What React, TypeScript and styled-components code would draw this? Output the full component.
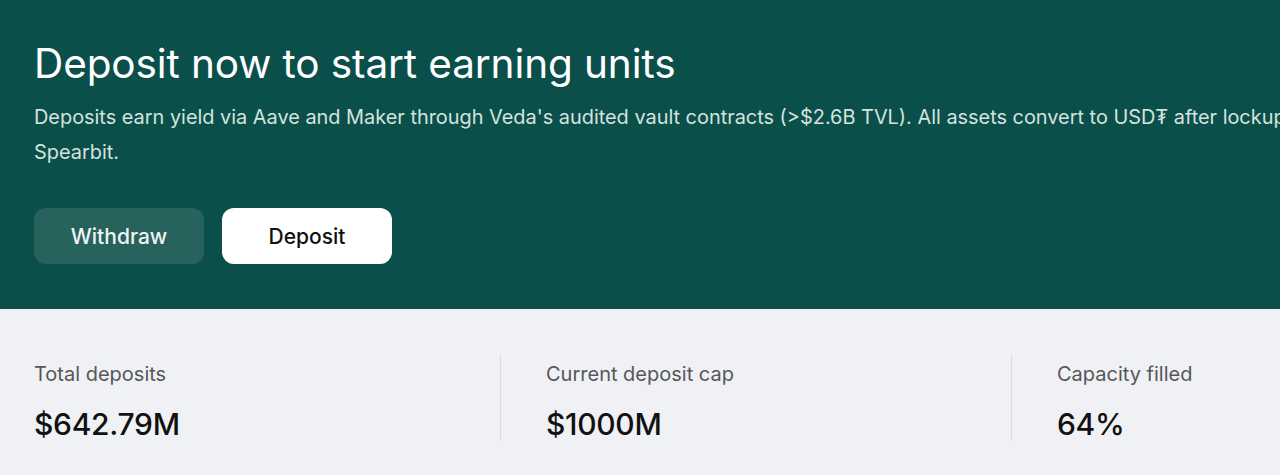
import React from "react";
import styled, { createGlobalStyle } from "styled-components";

const Global = createGlobalStyle`
  html, body { margin: 0; padding: 0; overflow: hidden; background: #f0f1f4; }
  body { font-family: Inter, "Noto Sans", Arial, sans-serif; -webkit-font-smoothing: antialiased; }
  * { box-sizing: border-box; }
`;

const Page = styled.div`
  width: 1600px;
`;

const Hero = styled.section`
  background: #0b4f4a;
  padding: 38px 34px 45px;
  height: 309px;
`;

const Title = styled.h1`
  margin: 0;
  font-size: 40.5px;
  line-height: 52px;
  font-weight: 400;
  color: #ffffff;
  letter-spacing: -0.1px;
`;

const Description = styled.p`
  margin: 10px 0 0;
  font-size: 19.9px;
  line-height: 35px;
  color: #d3e3df;
  white-space: nowrap;
`;

const Actions = styled.div`
  display: flex;
  gap: 18px;
  margin-top: 38px;
`;

const Button = styled.button<{ $primary?: boolean }>`
  width: 170px;
  height: 56px;
  border: none;
  border-radius: 12px;
  font-family: inherit;
  font-size: 21px;
  font-weight: 500;
  cursor: pointer;
  background: ${(p) => (p.$primary ? "#ffffff" : "#27625d")};
  color: ${(p) => (p.$primary ? "#111111" : "#eef5f3")};
`;

const Stats = styled.section`
  display: grid;
  grid-template-columns: 466px 511px 511px;
  padding: 46px 34px 0;
`;

const Stat = styled.div<{ $first?: boolean }>`
  padding: 7px 0 6px ${(p) => (p.$first ? "0" : "45px")};
  border-left: ${(p) => (p.$first ? "none" : "1px solid #dcdde0")};
  height: 86px;
`;

const Label = styled.div`
  font-size: 20px;
  line-height: 24px;
  color: #555759;
`;

const Value = styled.div`
  margin-top: 20px;
  font-size: 30px;
  line-height: 36px;
  font-weight: 500;
  color: #111111;
  letter-spacing: -0.3px;
`;

const stats = [
  { label: "Total deposits", value: "$642.79M" },
  { label: "Current deposit cap", value: "$1000M" },
  { label: "Capacity filled", value: "64%" },
];

export default function App() {
  return (
    <Page>
      <Global />
      <Hero>
        <Title>Deposit now to start earning units</Title>
        <Description>
          Deposits earn yield via Aave and Maker through Veda's audited vault contracts (&gt;$2.6B TVL). All assets convert to USD₮ after lockup period. Audited by
          <br />
          Spearbit.
        </Description>
        <Actions>
          <Button>Withdraw</Button>
          <Button $primary>Deposit</Button>
        </Actions>
      </Hero>
      <Stats>
        {stats.map((s, i) => (
          <Stat key={s.label} $first={i === 0}>
            <Label>{s.label}</Label>
            <Value>{s.value}</Value>
          </Stat>
        ))}
      </Stats>
    </Page>
  );
}
